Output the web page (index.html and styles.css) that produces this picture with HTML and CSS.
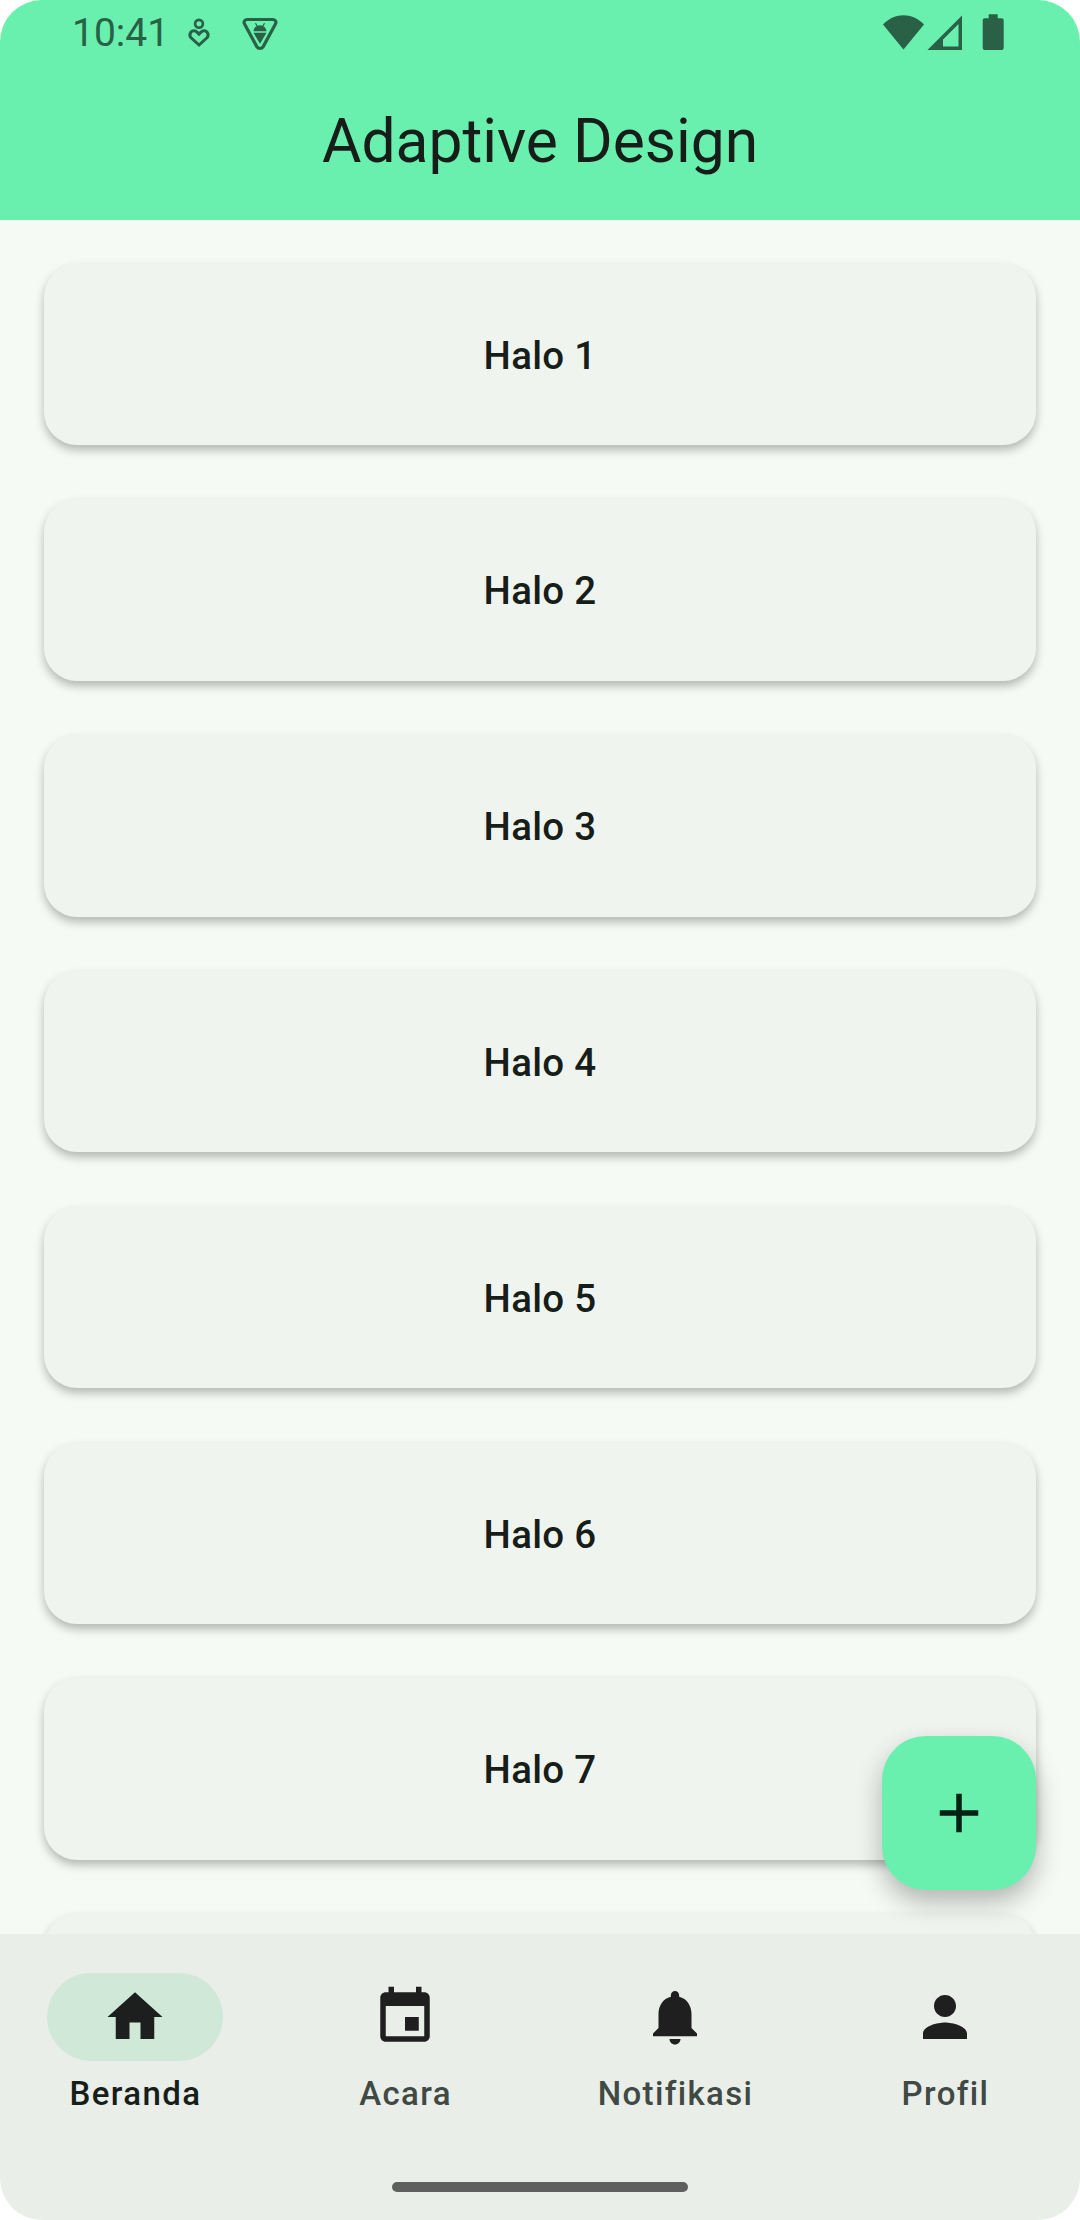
FILE: index.html
```html
<!DOCTYPE html>
<html lang="id">
<head>
<meta charset="utf-8">
<title>Adaptive Design</title>
<link rel="stylesheet" href="styles.css">
</head>
<body>
<div class="screen">
  <header class="app-bar">
    <div class="status-bar">
      <span class="clock">10:41</span>
      <svg class="status-wellbeing" viewBox="0 0 24 32" fill="none" stroke="currentColor">
        <circle cx="12" cy="6.7" r="3.9" stroke-width="2.7"/>
        <path d="M12 28 3.800 20.500a4.400 4.400 0 0 1 0-5.200 4.200 4.200 0 0 1 6.200-.2l2 2 2-2a4.200 4.200 0 0 1 6.200.2 4.400 4.400 0 0 1 0 5.200z" stroke-width="3"/>
      </svg>
      <svg class="status-debug" viewBox="0 0 36 34">
        <path d="M5.500 2.500h25c3 0 4.200 2.500 2.800 4.800L21.200 29.600c-1.500 2.500-4.900 2.500-6.400 0L2.700 7.300C1.300 5 2.500 2.500 5.500 2.500z" fill="none" stroke="currentColor" stroke-width="3.200"/>
        <path d="M11.500 14.200a6.500 6 0 0 1 13 0zM11.500 15.800h13L18 26.700z" fill="currentColor"/>
        <path d="m13.500 6.200 1.800 3.300M22.500 6.200l-1.800 3.300" stroke="currentColor" stroke-width="1.200"/>
      </svg>
      <svg class="status-system" viewBox="0 0 122 38" fill="currentColor">
        <path d="M0 10.500C12-1.700 29-1.700 41 10.500L20.500 35.500z"/>
        <path fill-rule="evenodd" d="M44.500 36 79 1.500V36zM60 25.500V32.500H75.500V10z"/>
        <path d="M105.700.3h9v4h4a2 2 0 0 1 2 2V34a2 2 0 0 1-2 2h-17a2 2 0 0 1-2-2V6.300a2 2 0 0 1 2-2h4z"/>
      </svg>
    </div>
    <h1 class="title">Adaptive Design</h1>
  </header>

  <main class="content">
    <div class="list">
      <div class="card">Halo 1</div>
      <div class="card">Halo 2</div>
      <div class="card">Halo 3</div>
      <div class="card">Halo 4</div>
      <div class="card">Halo 5</div>
      <div class="card">Halo 6</div>
      <div class="card">Halo 7</div>
      <div class="card"></div>
    </div>
    <button class="fab" aria-label="Tambah">
      <svg class="icon" viewBox="0 0 24 24"><path d="M19 13h-6v6h-2v-6H5v-2h6V5h2v6h6z"/></svg>
    </button>
  </main>

  <footer class="bottom">
    <nav class="nav">
      <a class="nav-item active">
        <span class="indicator"><svg class="icon" viewBox="0 0 24 24"><path d="M10 20v-6h4v6h5v-8h3L12 3 2 12h3v8z"/></svg></span>
        <span class="label">Beranda</span>
      </a>
      <a class="nav-item">
        <span class="indicator"><svg class="icon" viewBox="0 0 24 24"><path d="M17 12h-5v5h5v-5zM16 1v2H8V1H6v2H5c-1.110 0-1.990.9-1.990 2L3 19c0 1.100.89 2 2 2h14c1.100 0 2-.9 2-2V5c0-1.100-.9-2-2-2h-1V1h-2zm3 18H5V8h14v11z"/></svg></span>
        <span class="label">Acara</span>
      </a>
      <a class="nav-item">
        <span class="indicator"><svg class="icon" viewBox="0 0 24 24"><path d="M12 22c1.100 0 2-.9 2-2h-4c0 1.100.89 2 2 2zm6-6v-5c0-3.070-1.640-5.640-4.500-6.320V4c0-.83-.67-1.500-1.500-1.500s-1.500.67-1.500 1.500v.68C7.630 5.360 6 7.920 6 11v5l-2 2v1h16v-1l-2-2z"/></svg></span>
        <span class="label">Notifikasi</span>
      </a>
      <a class="nav-item">
        <span class="indicator"><svg class="icon" viewBox="0 0 24 24"><path d="M12 12c2.210 0 4-1.790 4-4s-1.790-4-4-4-4 1.790-4 4 1.790 4 4 4zm0 2c-2.670 0-8 1.340-8 4v2h16v-2c0-2.660-5.330-4-8-4z"/></svg></span>
        <span class="label">Profil</span>
      </a>
    </nav>
    <div class="handle"></div>
  </footer>
</div>
</body>
</html>
```
FILE: styles.css
```css
* { box-sizing: border-box; }

body {
  margin: 0;
  background: #fff;
  font-family: Roboto, sans-serif;
  color: #171d19;
}

.screen {
  display: flex;
  flex-direction: column;
  width: 1080px;
  height: 2220px;
  border-radius: 42px;
  overflow: hidden;
  background: #f5fbf4;
}

.app-bar {
  height: 220px;
  background: #69f0ae;
}

.status-bar {
  display: flex;
  align-items: flex-start;
  height: 66px;
  padding: 14px 76px 0 72px;
  color: #2a6146;
}

.clock {
  width: 115px;
  font-size: 39px;
  line-height: 39px;
}

.status-wellbeing {
  width: 24px;
  height: 32px;
  margin: 3px 0 0 0;
}

.status-debug {
  width: 36px;
  height: 34px;
  margin: 3px 0 0 31px;
}

.status-system {
  width: 122px;
  height: 38px;
  margin-left: auto;
  margin-right: -1px;
}

.title {
  margin: 0;
  text-align: center;
  font-size: 60.5px;
  font-weight: 400;
  line-height: 152px;
}

.content {
  position: relative;
  height: 1714px;
  overflow: hidden;
}

.list {
  display: flex;
  flex-direction: column;
  gap: 54.33px;
  padding: 43.5px 44px 0;
}

.card {
  flex: none;
  height: 181.5px;
  border-radius: 33px;
  background: #eff5ee;
  box-shadow: 0 5px 10px rgba(0, 0, 0, 0.27);
  text-align: center;
  font-size: 38.5px;
  font-weight: 500;
  letter-spacing: 0.275px;
  line-height: 183px;
}

.fab {
  position: absolute;
  right: 44px;
  bottom: 44px;
  display: grid;
  place-items: center;
  width: 154px;
  height: 154px;
  padding: 0;
  border: 0;
  border-radius: 44px;
  background: #69f0ae;
  color: #002114;
  box-shadow: 0 12px 26px rgba(0, 0, 0, 0.28);
}

.icon {
  display: block;
  width: 66px;
  height: 66px;
  fill: currentColor;
}

.bottom {
  display: flex;
  flex-direction: column;
  align-items: center;
  justify-content: space-between;
  height: 286px;
  padding: 38.5px 0 28px;
  background: #e9eee8;
}

.nav {
  display: grid;
  grid-template-columns: repeat(4, 1fr);
  width: 100%;
}

.nav-item {
  display: flex;
  flex-direction: column;
  align-items: center;
  gap: 11px;
}

.indicator {
  display: grid;
  place-items: center;
  width: 176px;
  height: 88px;
  border-radius: 44px;
  color: #1f1f1f;
}

.active .indicator {
  background: #d0e8d8;
  color: #1c1f1d;
}

.label {
  padding-left: 1px;
  color: #404943;
  font-size: 33px;
  font-weight: 500;
  letter-spacing: 1.375px;
  line-height: 44px;
}

.active .label { color: #171d19; }

.handle {
  width: 296px;
  height: 10px;
  border-radius: 5px;
  background: #5d605c;
}
```
